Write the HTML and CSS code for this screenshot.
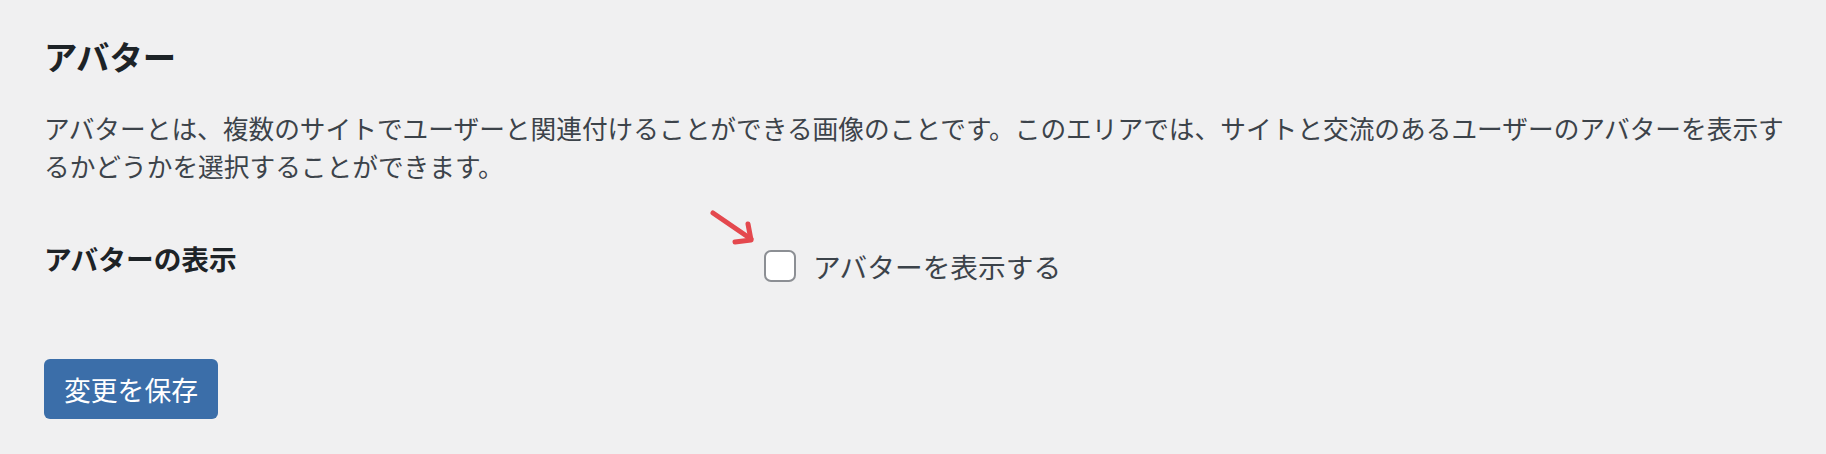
FILE: index.html
```html
<!DOCTYPE html>
<html lang="ja">

<head>
    <meta charset="UTF-8">
    <meta name="viewport" content="width=device-width, initial-scale=1.0">
    <title>アバター設定</title>
    <link rel="stylesheet" href="styles.css">
</head>

<body>
    <div class="wrap">
        <h2 class="title">アバター</h2>
        <p class="desc">アバターとは、複数のサイトでユーザーと関連付けることができる画像のことです。このエリアでは、サイトと交流のあるユーザーのアバターを表示するかどうかを選択することができます。</p>

        <div class="form-row">
            <div class="row-label">アバターの表示</div>
            <div class="row-field">
                <!-- annotation arrow pointing at the checkbox -->
                <svg class="pointer" width="50" height="42" viewBox="0 0 50 42">
                    <path d="M5 7 L43 33" />
                    <path d="M40 18 L43 34 L27 36" />
                </svg>
                <label class="check">
                    <input type="checkbox" id="show_avatars">
                    <span>アバターを表示する</span>
                </label>
            </div>
        </div>

        <button class="button-primary">変更を保存</button>
    </div>
</body>

</html>
```

FILE: styles.css
```css
/* Reset */
body,
h2,
p {
    margin: 0;
    padding: 0;
}

body {
    background-color: #f0f0f1;
    color: #3c434a;
    font-family: "Noto Sans CJK JP", sans-serif;
}

.wrap {
    padding: 36px 20px 40px 44px;
}

/* Section heading */
.title {
    font-size: 33.4px;
    line-height: 40px;
    font-weight: 700;
    color: #1d2327;
}

.desc {
    margin-top: 33px;
    font-size: 25.7px;
    line-height: 38px;
}

/* Settings row */
.form-row {
    display: flex;
    align-items: flex-start;
    margin-top: 55px;
}

.row-label {
    width: 720px;
    flex-shrink: 0;
    font-size: 27.7px;
    line-height: 36px;
    font-weight: 700;
    color: #1d2327;
}

.row-field {
    position: relative;
    padding-top: 8px;
}

.check {
    display: flex;
    align-items: center;
    gap: 17px;
    font-size: 27.7px;
    line-height: 36px;
    color: #3c434a;
}

.check input {
    appearance: none;
    -webkit-appearance: none;
    margin: 0;
    width: 32px;
    height: 32px;
    box-sizing: border-box;
    border: 2px solid #8c8f94;
    border-radius: 7px;
    background-color: #fff;
}

.pointer {
    position: absolute;
    left: -56px;
    top: -34px;
    fill: none;
    stroke: #e4484e;
    stroke-width: 5;
    stroke-linecap: round;
    stroke-linejoin: round;
}

/* Save button */
.button-primary {
    display: block;
    margin-top: 75px;
    height: 60px;
    padding: 0 20px;
    font-family: inherit;
    font-size: 26.8px;
    color: #fff;
    background-color: #3b6ea9;
    border: none;
    border-radius: 6px;
}
```
